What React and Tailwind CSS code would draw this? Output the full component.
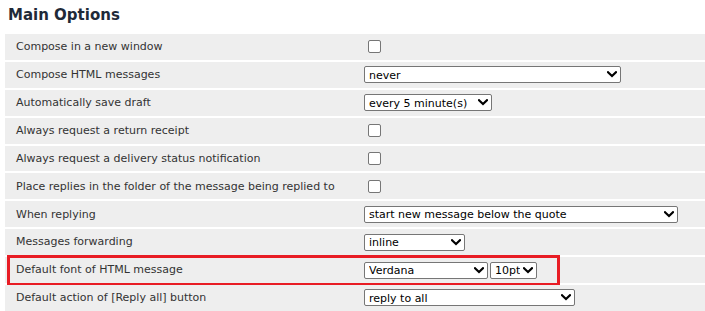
import React from "react";

const Chevron = () => (
  <svg width="10" height="7" viewBox="0 0 10 7" className="shrink-0">
    <path d="M1 1.2 L5 5 L9 1.2" fill="none" stroke="#000" strokeWidth="2.2" strokeLinecap="square" />
  </svg>
);

const Select = ({ value, w }) => (
  <div
    className="h-[17px] bg-white border border-[#767676] rounded-[2px] flex items-center justify-between pl-[4px] pr-[3px] text-[11px] text-black leading-none"
    style={{ width: w }}
  >
    <span className="whitespace-nowrap overflow-hidden pt-[1px]">{value}</span>
    <Chevron />
  </div>
);

const Checkbox = () => (
  <div className="ml-[4px] w-[13px] h-[13px] bg-white border border-[#767676] rounded-[2px]" />
);

const rows = [
  { label: "Compose in a new window", control: <Checkbox /> },
  { label: "Compose HTML messages", control: <Select value="never" w={257} /> },
  { label: "Automatically save draft", control: <Select value="every 5 minute(s)" w={128} /> },
  { label: "Always request a return receipt", control: <Checkbox /> },
  { label: "Always request a delivery status notification", control: <Checkbox /> },
  { label: "Place replies in the folder of the message being replied to", control: <Checkbox /> },
  { label: "When replying", control: <Select value="start new message below the quote" w={314} /> },
  { label: "Messages forwarding", control: <Select value="inline" w={101} /> },
  {
    label: "Default font of HTML message",
    control: (
      <div className="flex items-center gap-[2px]">
        <Select value="Verdana" w={124} />
        <Select value="10pt" w={47} />
      </div>
    ),
    highlight: true,
  },
  { label: "Default action of [Reply all] button", control: <Select value="reply to all" w={211} /> },
];

export default function App() {
  return (
    <div
      className="w-[705px] h-[311px] bg-white overflow-hidden relative"
      style={{ fontFamily: '"DejaVu Sans", Verdana, sans-serif' }}
    >
      <div className="h-[31px] flex items-center pl-[8px] text-[15px] font-bold text-[#1f2a38]">
        Main Options
      </div>
      <div className="mt-[3px] ml-[5px] flex flex-col gap-[2px]">
        {rows.map((r, i) => (
          <div key={i} className="relative h-[25.9px] bg-[#eeeeee] flex items-center">
            <div className="w-[359px] pl-[11px] pt-[1px] text-[11px] text-[#333333] whitespace-nowrap">{r.label}</div>
            <div className="flex items-center">{r.control}</div>
            {r.highlight && (
              <div className="absolute left-[2px] top-[-2px] w-[553px] h-[31px] border-[3px] border-[#e81c24] pointer-events-none" />
            )}
          </div>
        ))}
      </div>
    </div>
  );
}
